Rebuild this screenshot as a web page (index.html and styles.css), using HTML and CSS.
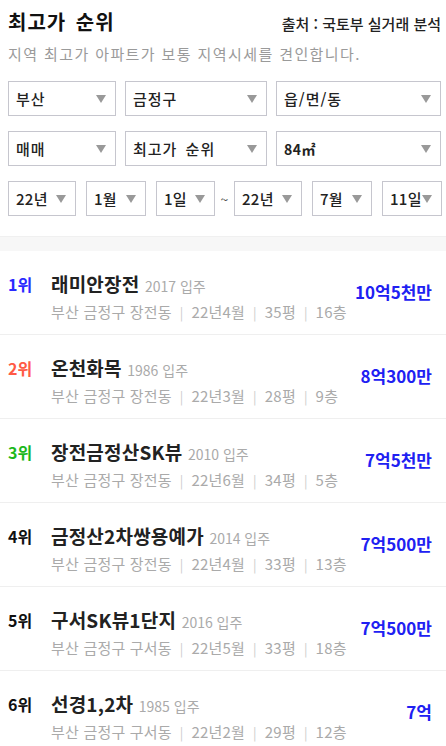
FILE: index.html
```html
<!DOCTYPE html>
<html lang="ko">
<head>
<meta charset="utf-8">
<title>최고가 순위</title>
<link rel="stylesheet" href="styles.css">
</head>
<body>
<div class="header">
  <div class="title-row">
    <h1 class="title">최고가 순위</h1>
    <div class="source">출처 : 국토부 실거래 분석</div>
  </div>
  <p class="desc">지역 최고가 아파트가 보통 지역시세를 견인합니다.</p>
</div>

<div class="filters">
  <div class="row row-3">
    <div class="sel"><span>부산</span><i class="arrow"></i></div>
    <div class="sel"><span>금정구</span><i class="arrow"></i></div>
    <div class="sel"><span>읍/면/동</span><i class="arrow"></i></div>
  </div>
  <div class="row row-3">
    <div class="sel"><span>매매</span><i class="arrow"></i></div>
    <div class="sel"><span>최고가 순위</span><i class="arrow"></i></div>
    <div class="sel"><span class="bold">84㎡</span><i class="arrow"></i></div>
  </div>
  <div class="row row-date">
    <div class="sel date w68"><span>22년</span><i class="arrow"></i></div>
    <div class="sel date w60"><span>1월</span><i class="arrow"></i></div>
    <div class="sel date w59"><span>1일</span><i class="arrow"></i></div>
    <div class="tilde">~</div>
    <div class="sel date w68"><span>22년</span><i class="arrow"></i></div>
    <div class="sel date w60"><span>7월</span><i class="arrow"></i></div>
    <div class="sel date w60"><span>11일</span><i class="arrow"></i></div>
  </div>
</div>

<div class="band"></div>

<ul class="list">
  <li class="item">
    <div class="rank r1">1위</div>
    <div class="info">
      <div class="name">래미안장전 <span class="year">2017 입주</span></div>
      <div class="meta">부산 금정구 장전동<span class="sep">|</span>22년4월<span class="sep">|</span>35평<span class="sep">|</span>16층</div>
    </div>
    <div class="price">10억5천만</div>
  </li>
  <li class="item">
    <div class="rank r2">2위</div>
    <div class="info">
      <div class="name">온천화목 <span class="year">1986 입주</span></div>
      <div class="meta">부산 금정구 장전동<span class="sep">|</span>22년3월<span class="sep">|</span>28평<span class="sep">|</span>9층</div>
    </div>
    <div class="price">8억300만</div>
  </li>
  <li class="item">
    <div class="rank r3">3위</div>
    <div class="info">
      <div class="name">장전금정산SK뷰 <span class="year">2010 입주</span></div>
      <div class="meta">부산 금정구 장전동<span class="sep">|</span>22년6월<span class="sep">|</span>34평<span class="sep">|</span>5층</div>
    </div>
    <div class="price">7억5천만</div>
  </li>
  <li class="item">
    <div class="rank">4위</div>
    <div class="info">
      <div class="name">금정산2차쌍용예가 <span class="year">2014 입주</span></div>
      <div class="meta">부산 금정구 장전동<span class="sep">|</span>22년4월<span class="sep">|</span>33평<span class="sep">|</span>13층</div>
    </div>
    <div class="price">7억500만</div>
  </li>
  <li class="item">
    <div class="rank">5위</div>
    <div class="info">
      <div class="name">구서SK뷰1단지 <span class="year">2016 입주</span></div>
      <div class="meta">부산 금정구 구서동<span class="sep">|</span>22년5월<span class="sep">|</span>33평<span class="sep">|</span>18층</div>
    </div>
    <div class="price">7억500만</div>
  </li>
  <li class="item">
    <div class="rank">6위</div>
    <div class="info">
      <div class="name">선경1,2차 <span class="year">1985 입주</span></div>
      <div class="meta">부산 금정구 구서동<span class="sep">|</span>22년2월<span class="sep">|</span>29평<span class="sep">|</span>12층</div>
    </div>
    <div class="price">7억</div>
  </li>
</ul>
</body>
</html>
```

FILE: styles.css
```css
* { box-sizing: border-box; }
html, body { margin: 0; padding: 0; background: #fff; }
body {
  font-family: "Noto Sans CJK KR", "Noto Sans", sans-serif;
  color: #222;
  overflow: hidden;
}

.header { padding: 8px 5px 0 8px; }
.title-row {
  display: flex;
  justify-content: space-between;
  align-items: baseline;
  height: 28px;
}
.title {
  margin: 0;
  font-size: 20px;
  line-height: 28px;
  font-weight: 700;
  color: #111;
  letter-spacing: 1px;
  word-spacing: 3px;
}
.source {
  font-size: 15px;
  line-height: 20px;
  font-weight: 500;
  color: #222;
}
.desc {
  margin: 8px 0 0;
  font-size: 15px;
  line-height: 20px;
  color: #9a9a9a;
  letter-spacing: 1.4px;
}

.filters {
  padding: 17px 5px 0 8px;
  display: flex;
  flex-direction: column;
  gap: 15px;
}
.row { height: 35px; }
.row-3 {
  display: grid;
  grid-template-columns: 108px 142px 1fr;
  column-gap: 9px;
}
.row-date {
  display: flex;
  gap: 10px;
}
.w68 { width: 68px; }
.w60 { width: 60px; }
.w59 { width: 59px; }

.sel {
  flex: none;
  border: 1px solid #c6c6ce;
  display: flex;
  align-items: center;
  justify-content: space-between;
  padding: 0 9px 0 7px;
  font-size: 15px;
  font-weight: 500;
  letter-spacing: 1px;
  word-spacing: 3px;
  color: #222;
  white-space: nowrap;
  min-width: 0;
}
.sel .bold { font-weight: 700; font-size: 14px; letter-spacing: 0.5px; }
.sel.date { font-weight: 500; letter-spacing: 0.3px; }
.arrow {
  flex: none;
  width: 0;
  height: 0;
  border-left: 5px solid transparent;
  border-right: 5px solid transparent;
  border-top: 8px solid #999;
}
.tilde {
  flex: none;
  width: 19px;
  margin: 0 -10px;
  display: flex;
  align-items: center;
  justify-content: center;
  font-size: 14px;
  color: #444;
}

.band {
  margin-top: 20px;
  height: 15px;
  background: #f7f7f7;
  border-top: 1px solid #f0f0f0;
}

.list { list-style: none; margin: 0; padding: 0; }
.item {
  display: flex;
  height: 84px;
  padding: 20px 14px 0 8px;
  border-bottom: 1px solid #efefef;
}
.rank {
  flex: none;
  width: 43px;
  height: 26px;
  font-size: 16px;
  line-height: 26px;
  font-weight: 700;
  color: #111;
}
.r1 { color: #2a2aff; }
.r2 { color: #ff5a45; }
.r3 { color: #1cb81c; }
.info { flex: 1; min-width: 0; }
.name {
  height: 26px;
  font-size: 19px;
  line-height: 26px;
  font-weight: 700;
  color: #222;
  white-space: nowrap;
  letter-spacing: 0.2px;
}
.year {
  font-size: 14px;
  line-height: 1;
  font-weight: 400;
  color: #aaa;
  letter-spacing: 0;
}
.meta {
  margin-top: 5px;
  height: 20px;
  font-size: 15px;
  line-height: 20px;
  color: #aaa;
  white-space: nowrap;
  letter-spacing: 0.2px;
}
.sep {
  display: inline-block;
  margin: 0 8px;
  color: #ccc;
  font-size: 13px;
  line-height: 1;
}
.price {
  flex: none;
  align-self: center;
  margin-top: -22px;
  font-size: 17px;
  line-height: 24px;
  font-weight: 700;
  color: #2020f2;
}
```
